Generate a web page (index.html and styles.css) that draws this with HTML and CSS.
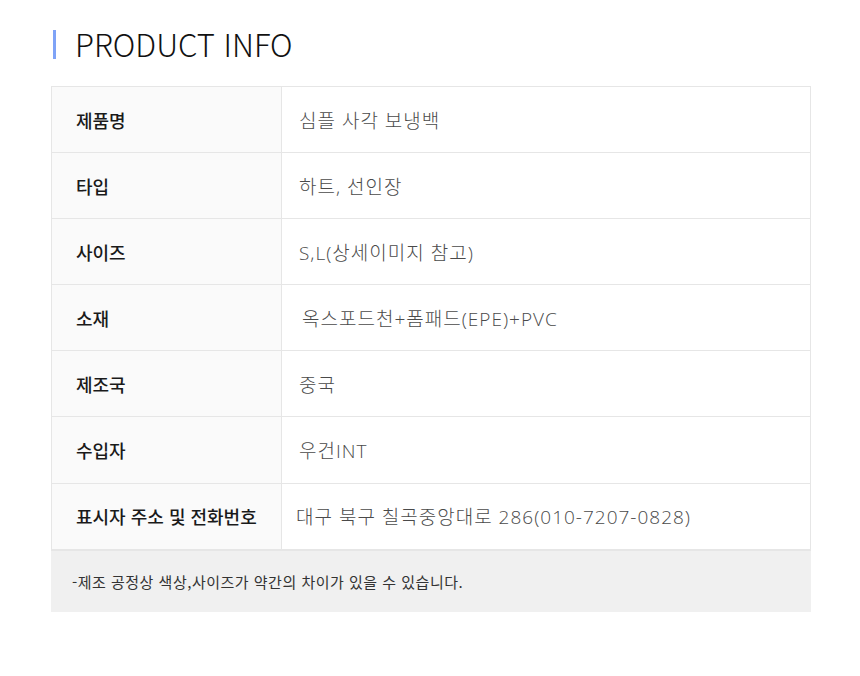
FILE: index.html
```html
<!DOCTYPE html>
<html lang="ko">
<head>
  <meta charset="UTF-8">
  <title>Product Info</title>
  <link rel="stylesheet" href="styles.css">
</head>
<body>
  <div class="wrap">
    <h2 class="title">PRODUCT INFO</h2>

    <table class="info">
      <tr><th>제품명</th><td>심플 사각 보냉백</td></tr>
      <tr><th>타입</th><td>하트, 선인장</td></tr>
      <tr><th>사이즈</th><td>S,L(상세이미지 참고)</td></tr>
      <tr><th>소재</th><td class="indent">옥스포드천+폼패드(EPE)+PVC</td></tr>
      <tr><th>제조국</th><td>중국</td></tr>
      <tr><th>수입자</th><td>우건INT</td></tr>
      <tr><th>표시자 주소 및 전화번호</th><td class="tight">대구 북구 칠곡중앙대로 286(010-7207-0828)</td></tr>
    </table>

    <p class="note">-제조 공정상 색상,사이즈가 약간의 차이가 있을 수 있습니다.</p>
  </div>
</body>
</html>
```

FILE: styles.css
```css
body {
  margin: 0;
  background: #fff;
  font-family: "Noto Sans CJK KR", "Noto Sans", sans-serif;
  color: #222;
}

.wrap {
  width: 760px;
  margin: 0 0 0 51px;
  padding-top: 26px;
}

.title {
  display: flex;
  align-items: center;
  gap: 19px;
  margin: 0 0 24px 2px;
  font-size: 31px;
  font-weight: 300;
  line-height: 36px;
  color: #111;
}

.title::before {
  content: "";
  width: 3px;
  height: 29px;
  background: #7fa3f7;
}

.info {
  width: 100%;
  border-collapse: collapse;
  border: 1px solid #e6e6e6;
  border-bottom: 2px solid #e6e6e6;
}

.info th,
.info td {
  height: 65.1px;
  border-top: 1px solid #e6e6e6;
  font-size: 18px;
  text-align: left;
  padding: 0;
}

.info th {
  width: 205px;
  padding-left: 24px;
  background: #fafafa;
  border-right: 1px solid #e6e6e6;
  font-weight: 500;
  color: #1a1a1a;
}

.info td {
  padding-left: 17px;
  font-family: "Open Sans", "Noto Sans CJK KR", sans-serif;
  font-size: 19px;
  font-weight: 300;
  color: #4a4a4a;
  letter-spacing: 1px;
}

.info td.indent {
  padding-left: 20px;
}

.info td.tight {
  padding-left: 14px;
}

.note {
  margin: 0;
  height: 61px;
  padding-left: 21px;
  background: #f0f0f0;
  font-size: 15px;
  line-height: 61px;
  letter-spacing: 0.5px;
  color: #333;
}
```
